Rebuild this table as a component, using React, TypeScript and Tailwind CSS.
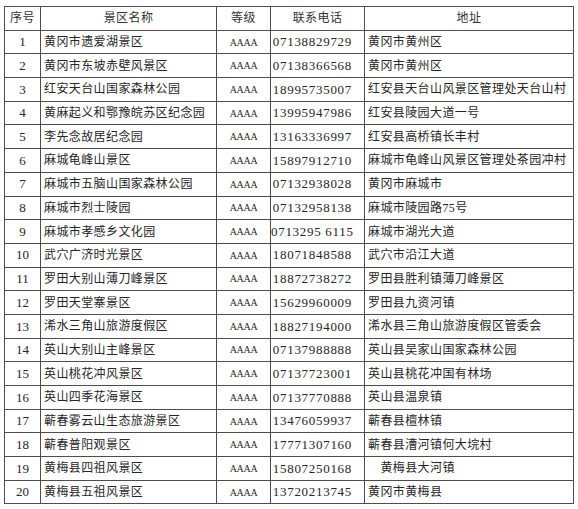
const rows = [
  ["黄冈市遗爱湖景区", "07138829729", "黄冈市黄州区"],
  ["黄冈市东坡赤壁风景区", "07138366568", "黄冈市黄州区"],
  ["红安天台山国家森林公园", "18995735007", "红安县天台山风景区管理处天台山村"],
  ["黄麻起义和鄂豫皖苏区纪念园", "13995947986", "红安县陵园大道一号"],
  ["李先念故居纪念园", "13163336997", "红安县高桥镇长丰村"],
  ["麻城龟峰山景区", "15897912710", "麻城市龟峰山风景区管理处茶园冲村"],
  ["麻城市五脑山国家森林公园", "07132938028", "黄冈市麻城市"],
  ["麻城市烈士陵园", "07132958138", "麻城市陵园路75号"],
  ["麻城市孝感乡文化园", "0713295 6115", "麻城市湖光大道"],
  ["武穴广济时光景区", "18071848588", "武穴市沿江大道"],
  ["罗田大别山薄刀峰景区", "18872738272", "罗田县胜利镇薄刀峰景区"],
  ["罗田天堂寨景区", "15629960009", "罗田县九资河镇"],
  ["浠水三角山旅游度假区", "18827194000", "浠水县三角山旅游度假区管委会"],
  ["英山大别山主峰景区", "07137988888", "英山县吴家山国家森林公园"],
  ["英山桃花冲风景区", "07137723001", "英山县桃花冲国有林场"],
  ["英山四季花海景区", "07137770888", "英山县温泉镇"],
  ["蕲春雾云山生态旅游景区", "13476059937", "蕲春县檀林镇"],
  ["蕲春普阳观景区", "17771307160", "蕲春县漕河镇何大垸村"],
  ["黄梅县四祖风景区", "15807250168", "\u3000黄梅县大河镇"],
  ["黄梅县五祖风景区", "13720213745", "黄冈市黄梅县"],
];

const cell = "border border-[#4d4d4d] p-0";

export default function App() {
  return (
    <div className="w-[578px] h-[509px] bg-white pt-[6px] pl-[4px] text-[#262626] font-['Liberation_Serif','Noto_Sans_CJK_SC',serif]">
      <table className="border-collapse table-fixed w-[569px]">
        <colgroup>
          <col className="w-[36px]" />
          <col className="w-[176px]" />
          <col className="w-[54px]" />
          <col className="w-[94px]" />
          <col className="w-[209px]" />
        </colgroup>
        <thead>
          <tr className="h-[23.7px] text-[12px] text-[#333] tracking-[0.4px]">
            <th className={`${cell} font-normal text-center`}>序号</th>
            <th className={`${cell} font-normal text-center`}>景区名称</th>
            <th className={`${cell} font-normal text-center`}>等级</th>
            <th className={`${cell} font-normal text-center`}>联系电话</th>
            <th className={`${cell} font-normal text-center`}>地址</th>
          </tr>
        </thead>
        <tbody>
          {rows.map(([name, phone, addr], i) => (
            <tr key={i} className="h-[23.7px]">
              <td className={`${cell} text-center text-[13px]`}>{i + 1}</td>
              <td className={`${cell} pl-[3px] text-[12px] tracking-[0.4px] whitespace-nowrap`}>{name}</td>
              <td className={`${cell} text-center text-[10px] tracking-[-0.3px] text-[#2a2a2a]`}>AAAA</td>
              <td className={`${cell} text-right pr-[12px] text-[13px] tracking-[0.7px] whitespace-pre`}>{phone}</td>
              <td className={`${cell} pl-[3px] text-[12px] tracking-[0.4px] whitespace-nowrap`}>{addr}</td>
            </tr>
          ))}
        </tbody>
      </table>
    </div>
  );
}
